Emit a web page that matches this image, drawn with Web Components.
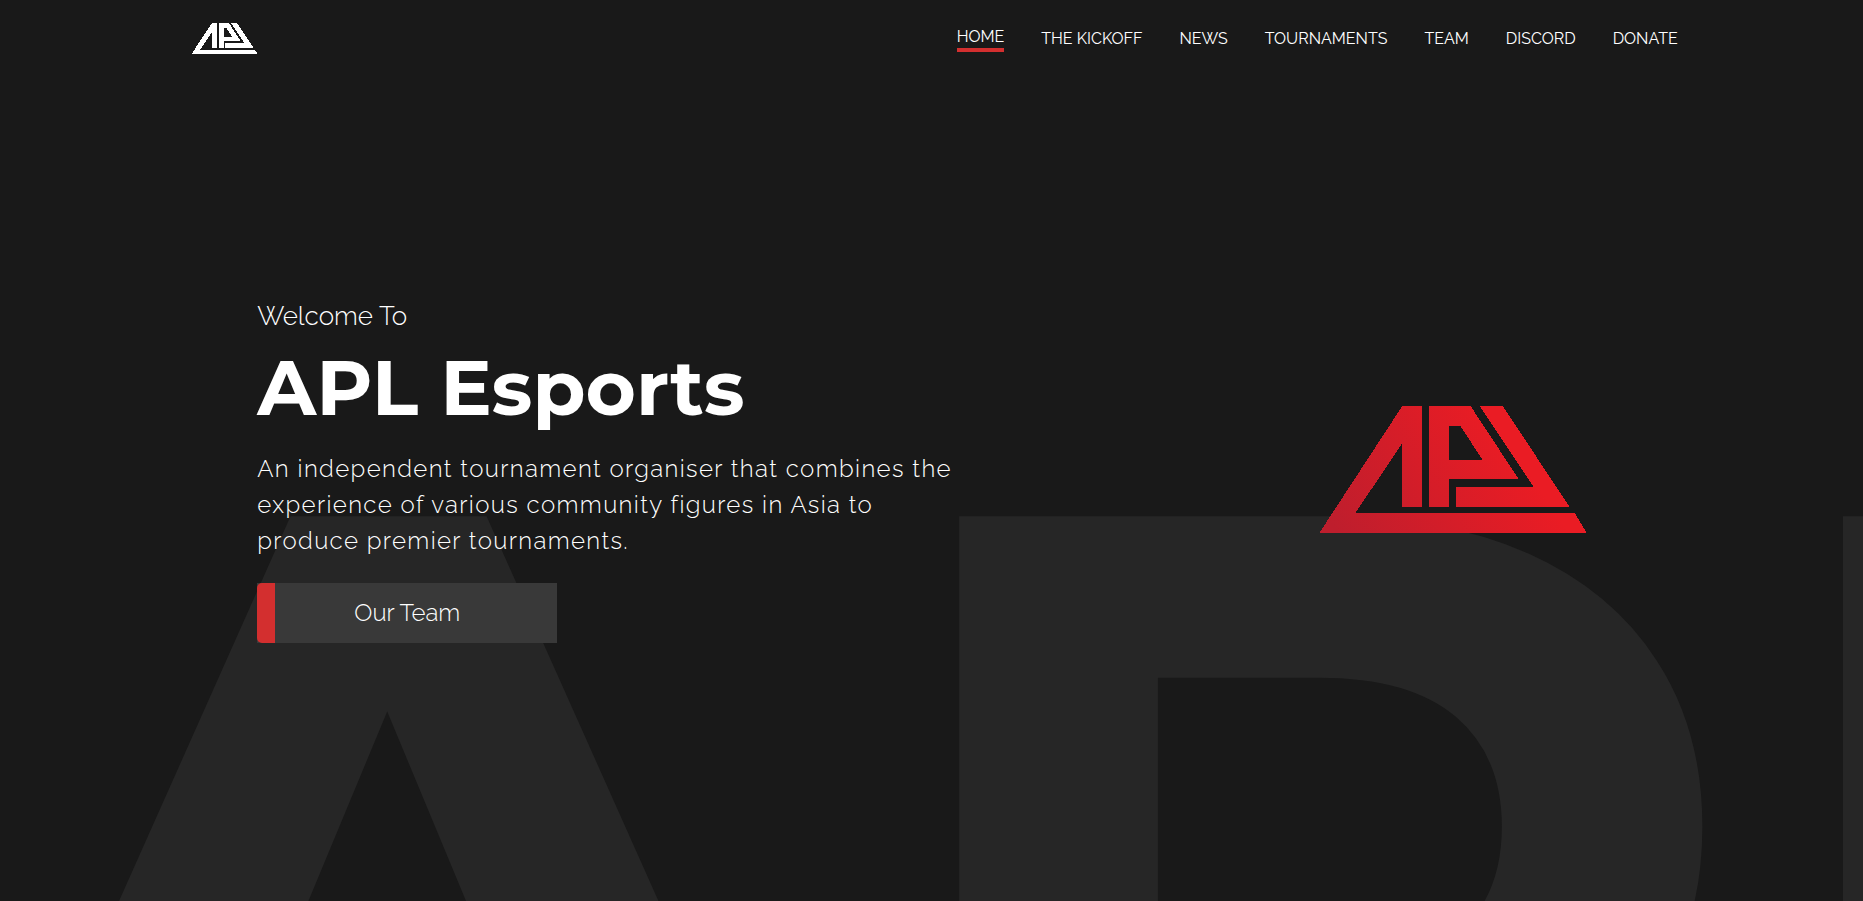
<!DOCTYPE html>
<html lang="en">
<head>
<meta charset="utf-8">
<title>APL Esports</title>
<style>
  body {
    margin: 0;
    background: #191919;
    color: #fff;
    font-family: Raleway, Lato, sans-serif;
    font-weight: 300;
  }
</style>
</head>
<body>
<apl-page>
  <apl-header slot="header">
    <apl-nav-link href="#home" current>HOME</apl-nav-link>
    <apl-nav-link href="#kickoff">THE KICKOFF</apl-nav-link>
    <apl-nav-link href="#news">NEWS</apl-nav-link>
    <apl-nav-link href="#tournaments">TOURNAMENTS</apl-nav-link>
    <apl-nav-link href="#team">TEAM</apl-nav-link>
    <apl-nav-link href="#discord">DISCORD</apl-nav-link>
    <apl-nav-link href="#donate">DONATE</apl-nav-link>
  </apl-header>
  <apl-hero>
    <span slot="eyebrow">Welcome To</span>
    <span slot="title">APL Esports</span>
    <span slot="lead">An independent tournament organiser that combines the experience of various community figures in Asia to produce premier tournaments.</span>
    <apl-button slot="action" href="#team">Our Team</apl-button>
  </apl-hero>
</apl-page>

<script>
function define(name, html, setup) {
  const template = document.createElement('template');
  template.innerHTML = html;
  customElements.define(name, class extends HTMLElement {
    constructor() {
      super();
      this.attachShadow({ mode: 'open' }).append(template.content.cloneNode(true));
    }
    connectedCallback() {
      if (setup) setup(this, this.shadowRoot);
    }
  });
}

function linkSetup(host, root) {
  const a = root.querySelector('a');
  a.href = host.getAttribute('href');
  if (host.hasAttribute('current')) a.setAttribute('aria-current', 'page');
}

define('apl-logo', `
  <style>
    :host { display: block; }
    svg { display: block; width: 100%; height: auto; fill: #fff; shape-rendering: crispEdges; }
    :host([red]) svg { fill: url(#red); }
  </style>
  <svg viewBox="0 0 801 381" role="img" aria-label="APL logo">
    <defs>
      <linearGradient id="red" gradientUnits="userSpaceOnUse" x1="90" y1="430" x2="570" y2="110">
        <stop offset="0" stop-color="#be1e2d"/>
        <stop offset="1" stop-color="#ea1c24"/>
      </linearGradient>
    </defs>
    <path fill-rule="evenodd" d="M249 0H309V303H249V111L108 321H765L801 381H0Z
      M330 0H453L597 219H390V303H330ZM390 60V162H489L423 60Z
      M480 0H549L750 303H408V243H642Z"/>
  </svg>`);

define('apl-nav-link', `
  <style>
    :host { display: block; }
    a { display: block; color: #fff; font-size: 16px; font-weight: 400; line-height: 22px; text-decoration: none; }
    a[aria-current] { border-bottom: 4px solid #d32f2f; }
  </style>
  <a><slot></slot></a>`, linkSetup);

define('apl-header', `
  <style>
    :host { display: block; }
    header { display: flex; align-items: center; justify-content: space-between; height: 77px;
        padding: 0 calc(10% - 1px) 0 calc(10% + 5px); }
    .brand { display: block; width: 67px; }
    nav { display: flex; align-items: center; gap: 37px; }
  </style>
  <header>
    <a class="brand" href="#home"><apl-logo></apl-logo></a>
    <nav aria-label="Main"><slot></slot></nav>
  </header>`);

define('apl-button', `
  <style>
    :host { display: block; }
    a { position: relative; display: block; width: 300px; background: #393939; color: #fff;
        font-size: 24px; line-height: 60px; text-align: center; text-decoration: none; }
    a::before { content: ""; position: absolute; inset: 0 auto 0 0; width: 18px;
        background: #d32f2f; border-radius: 5px 0 0 5px; }
  </style>
  <a><slot></slot></a>`, linkSetup);

define('apl-hero', `
  <style>
    :host { display: block; }
    section { display: grid; grid-template-columns: 1fr 305px; align-items: center;
        padding: 220px calc(10% + 71px) 0; }
    .copy { max-width: 720px; }
    p, h1 { margin: 0; }
    .eyebrow { font-size: 26px; line-height: 38px; }
    h1 { margin-top: 12px; font: 700 77px/80px Montserrat, Inter, sans-serif; }
    .lead { margin: 24px 0; font-size: 24px; line-height: 36px; letter-spacing: 0.057em; }
    apl-logo { width: 268px; justify-self: center; }
  </style>
  <section>
    <div class="copy">
      <p class="eyebrow"><slot name="eyebrow"></slot></p>
      <h1><slot name="title"></slot></h1>
      <p class="lead"><slot name="lead"></slot></p>
      <slot name="action"></slot>
    </div>
    <apl-logo red></apl-logo>
  </section>`);

define('apl-page', `
  <style>
    :host { display: block; position: relative; min-height: 100vh; overflow: hidden; isolation: isolate; }
    .backdrop { position: absolute; z-index: -1; top: 322px; left: -80px; color: #262626;
        font: 700 1224px/1 Montserrat, Inter, sans-serif; white-space: nowrap; }
  </style>
  <div class="backdrop" aria-hidden="true">APL</div>
  <slot name="header"></slot>
  <main><slot></slot></main>`);
</script>
</body>
</html>
